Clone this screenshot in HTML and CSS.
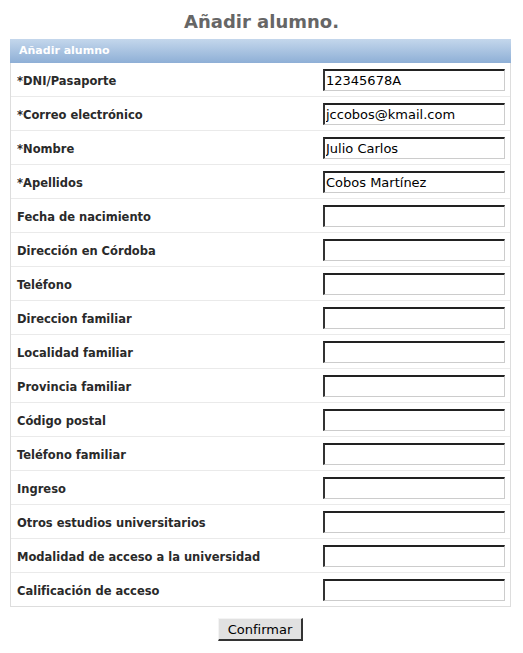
FILE: index.html
```html
<!DOCTYPE html>
<html lang="es">
<head>
<meta charset="utf-8">
<title>Añadir alumno.</title>
<link rel="stylesheet" href="styles.css">
</head>
<body>
<h1 class="title">Añadir alumno.</h1>
<form class="panel">
  <div class="panel-head">Añadir alumno</div>
  <div class="rows">
    <div class="row"><label class="lbl">*DNI/Pasaporte</label><input class="field" value="12345678A"></div>
    <div class="row"><label class="lbl">*Correo electrónico</label><input class="field" value="jccobos@kmail.com"></div>
    <div class="row"><label class="lbl">*Nombre</label><input class="field" value="Julio Carlos"></div>
    <div class="row"><label class="lbl">*Apellidos</label><input class="field" value="Cobos Martínez"></div>
    <div class="row"><label class="lbl">Fecha de nacimiento</label><input class="field"></div>
    <div class="row"><label class="lbl">Dirección en Córdoba</label><input class="field"></div>
    <div class="row"><label class="lbl">Teléfono</label><input class="field"></div>
    <div class="row"><label class="lbl">Direccion familiar</label><input class="field"></div>
    <div class="row"><label class="lbl">Localidad familiar</label><input class="field"></div>
    <div class="row"><label class="lbl">Provincia familiar</label><input class="field"></div>
    <div class="row"><label class="lbl">Código postal</label><input class="field"></div>
    <div class="row"><label class="lbl">Teléfono familiar</label><input class="field"></div>
    <div class="row"><label class="lbl">Ingreso</label><input class="field"></div>
    <div class="row"><label class="lbl">Otros estudios universitarios</label><input class="field"></div>
    <div class="row"><label class="lbl">Modalidad de acceso a la universidad</label><input class="field"></div>
    <div class="row"><label class="lbl">Calificación de acceso</label><input class="field"></div>
  </div>
  <div class="actions"><button type="button" class="btn">Confirmar</button></div>
</form>
</body>
</html>
```
FILE: styles.css
```css
html, body {
  margin: 0;
  padding: 0;
  background: #fff;
  font-family: "DejaVu Sans", sans-serif;
}
.title {
  margin: 0;
  padding-top: 11px;
  height: 28px;
  text-align: center;
  font-size: 18px;
  font-weight: bold;
  color: #666;
  line-height: 22px;
}
.panel {
  margin: 0 0 0 10px;
  width: 501px;
}
.panel-head {
  height: 24px;
  line-height: 24px;
  padding-left: 9px;
  font-size: 11px;
  font-weight: bold;
  color: #fff;
  background: linear-gradient(#c4d7ec, #8eafd6);
  box-sizing: border-box;
}
.rows {
  border-left: 1px solid #ddd;
  border-right: 1px solid #ddd;
  border-bottom: 1px solid #ddd;
}
.row {
  display: flex;
  align-items: center;
  justify-content: space-between;
  height: 33px;
  border-bottom: 1px solid #eaeaea;
  padding: 0 5px 0 6px;
}
.row:last-child {
  border-bottom: none;
}
.lbl {
  font-size: 11.5px;
  font-weight: bold;
  color: #2a2a2a;
  padding-top: 2px;
}
.field {
  box-sizing: border-box;
  width: 182px;
  height: 22px;
  margin: 0;
  padding: 1px 1px 0;
  font-family: "DejaVu Sans", sans-serif;
  font-size: 13px;
  color: #000;
  background: #fff;
  border-style: solid;
  border-width: 2px 1px 1px 2px;
  border-color: #222 #ccc #ccc #333;
  outline: none;
}
.actions {
  display: flex;
  justify-content: center;
  padding-top: 11px;
}
.btn {
  box-sizing: border-box;
  width: 85px;
  height: 23px;
  padding: 0;
  margin: 0;
  font-family: "DejaVu Sans", sans-serif;
  font-size: 13px;
  color: #000;
  background: #e1e1e1;
  border-style: solid;
  border-width: 1px 2px 2px 1px;
  border-color: #f4f4f4 #333 #333 #f4f4f4;
}
```
